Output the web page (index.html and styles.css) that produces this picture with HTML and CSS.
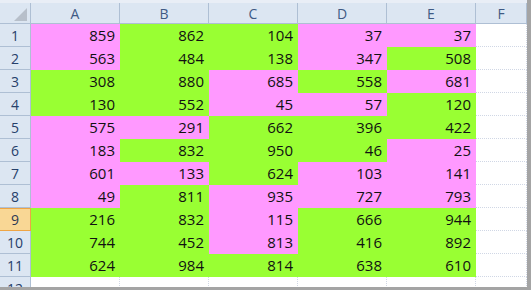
FILE: index.html
```html
<!DOCTYPE html>
<html>
<head>
<meta charset="utf-8">
<link rel="stylesheet" href="styles.css">
</head>
<body>
<div class="window">
  <div class="topstrip"></div>
  <div class="sheet">
    <div class="hd corner"><svg class="tri" width="13" height="13" viewBox="0 0 13 13"><polygon points="13,0 13,13 0,13" fill="#b7bfca"/></svg></div>
    <div class="hd col">A</div><div class="hd col">B</div><div class="hd col">C</div><div class="hd col">D</div><div class="hd col">E</div><div class="hd col">F</div>

    <div class="hd row">1</div><div class="c p">859</div><div class="c g">862</div><div class="c g">104</div><div class="c p">37</div><div class="c p">37</div><div class="c w"></div>
    <div class="hd row">2</div><div class="c p">563</div><div class="c g">484</div><div class="c g">138</div><div class="c p">347</div><div class="c g">508</div><div class="c w"></div>
    <div class="hd row">3</div><div class="c g">308</div><div class="c g">880</div><div class="c p">685</div><div class="c g">558</div><div class="c p">681</div><div class="c w"></div>
    <div class="hd row">4</div><div class="c g">130</div><div class="c g">552</div><div class="c p">45</div><div class="c p">57</div><div class="c g">120</div><div class="c w"></div>
    <div class="hd row">5</div><div class="c p">575</div><div class="c p">291</div><div class="c g">662</div><div class="c g">396</div><div class="c g">422</div><div class="c w"></div>
    <div class="hd row">6</div><div class="c p">183</div><div class="c g">832</div><div class="c g">950</div><div class="c g">46</div><div class="c p">25</div><div class="c w"></div>
    <div class="hd row">7</div><div class="c p">601</div><div class="c p">133</div><div class="c g">624</div><div class="c p">103</div><div class="c p">141</div><div class="c w"></div>
    <div class="hd row">8</div><div class="c p">49</div><div class="c g">811</div><div class="c p">935</div><div class="c p">727</div><div class="c p">793</div><div class="c w"></div>
    <div class="hd row sel">9</div><div class="c g">216</div><div class="c g">832</div><div class="c p">115</div><div class="c g">666</div><div class="c g">944</div><div class="c w"></div>
    <div class="hd row">10</div><div class="c g">744</div><div class="c g">452</div><div class="c p">813</div><div class="c g">416</div><div class="c g">892</div><div class="c w"></div>
    <div class="hd row">11</div><div class="c g">624</div><div class="c g">984</div><div class="c g">814</div><div class="c g">638</div><div class="c g">610</div><div class="c w"></div>
    <div class="hd row">12</div><div class="c w"></div><div class="c w"></div><div class="c w"></div><div class="c w"></div><div class="c w"></div><div class="c w"></div>
  </div>
</div>
</body>
</html>
```
FILE: styles.css
```css
html, body {
  margin: 0;
  padding: 0;
  background: #ffffff;
}
body {
  width: 531px;
  height: 290px;
  overflow: hidden;
}
.window {
  box-sizing: border-box;
  width: 531px;
  height: 290px;
  overflow: hidden;
  border-right: 4px solid #a4a4a4;
  border-bottom: 3px solid #a4a4a4;
  background: #ffffff;
}
.topstrip {
  height: 3px;
  background: #e9eef6;
}
.sheet {
  display: grid;
  grid-template-columns: 31px repeat(5, 89px) 51px;
  grid-template-rows: 21px;
  grid-auto-rows: 23px;
  font-family: "Open Sans", "Liberation Sans", sans-serif;
}
.hd {
  box-sizing: border-box;
  background: #dce6f2;
  border-right: 1px solid #aebfd4;
  border-bottom: 1px solid #aebfd4;
  color: #3f5a84;
  font-size: 14px;
  display: flex;
  align-items: center;
  justify-content: center;
}
.row {
  color: #26406a;
}
.corner {
  position: relative;
}
.tri {
  position: absolute;
  right: 3px;
  bottom: 2px;
}
.sel {
  background: #f9d795;
  border: 1px solid #eea545;
  border-left: none;
  color: #2d3a55;
}
.c {
  box-sizing: border-box;
  font-size: 15px;
  color: #111111;
  display: flex;
  align-items: center;
  justify-content: flex-end;
  padding-right: 4px;
  border-right: 1px solid transparent;
  border-bottom: 1px solid transparent;
}
.p {
  background: #ff99ff;
  border-color: #ff99ff;
}
.g {
  background: #99ff33;
  border-color: #99ff33;
}
.w {
  background: #ffffff;
  border-right: 1px dotted #d0d7e5;
  border-bottom: 1px dotted #d0d7e5;
}
```
